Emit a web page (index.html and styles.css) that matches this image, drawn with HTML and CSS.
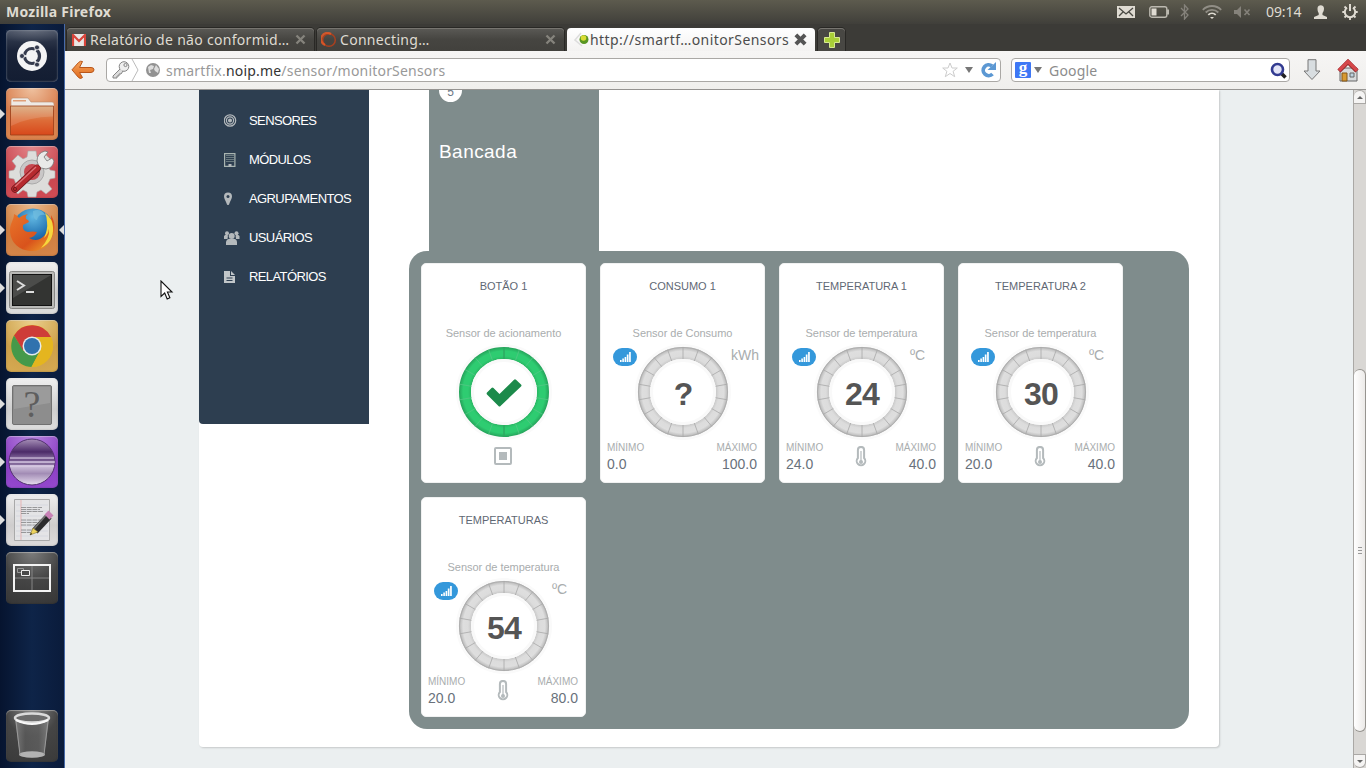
FILE: index.html
```html
<!DOCTYPE html>
<html lang="pt-BR">
<head>
<meta charset="utf-8">
<title>monitorSensors</title>
<link rel="stylesheet" href="styles.css">
</head>
<body>
<svg class="defs" width="0" height="0">
  <defs>
    <radialGradient id="gGrey" gradientUnits="userSpaceOnUse" cx="50" cy="50" r="45"><stop offset=".73" stop-color="#c8c8c8"/><stop offset=".8" stop-color="#dcdcdc"/><stop offset=".91" stop-color="#dedede"/><stop offset="1" stop-color="#b4b4b4"/></radialGradient>
    <radialGradient id="gGreen" gradientUnits="userSpaceOnUse" cx="50" cy="50" r="45"><stop offset=".73" stop-color="#29b562"/><stop offset=".8" stop-color="#2ecc71"/><stop offset=".91" stop-color="#2ecc71"/><stop offset="1" stop-color="#25a25a"/></radialGradient>
    <radialGradient id="shine" cx=".5" cy="0" r=".8"><stop offset="0" stop-color="#fff" stop-opacity=".55"/><stop offset="1" stop-color="#fff" stop-opacity="0"/></radialGradient>
    <linearGradient id="folder" x1="0" y1="0" x2="0" y2="1"><stop offset="0" stop-color="#d9a87a"/><stop offset=".5" stop-color="#dd6c38"/><stop offset="1" stop-color="#d8481b"/></linearGradient>
    <radialGradient id="globe" cx=".5" cy=".2" r=".8"><stop offset="0" stop-color="#63b9e3"/><stop offset=".6" stop-color="#2070b0"/><stop offset="1" stop-color="#153a78"/></radialGradient>
    <linearGradient id="fox" x1="0" y1="0" x2="1" y2="1"><stop offset="0" stop-color="#e8752a"/><stop offset=".6" stop-color="#d9531c"/><stop offset="1" stop-color="#f3ae2c"/></linearGradient>
    <linearGradient id="ecl" x1="0" y1="0" x2="0" y2="1"><stop offset="0" stop-color="#a790b8"/><stop offset=".28" stop-color="#4b2a68"/><stop offset=".45" stop-color="#8d74a5"/><stop offset=".6" stop-color="#cbbcd8"/><stop offset=".75" stop-color="#a28cb5"/><stop offset="1" stop-color="#e6dcee"/></linearGradient>
    <linearGradient id="bin" x1="0" y1="0" x2="1" y2="0"><stop offset="0" stop-color="#8a8a8a"/><stop offset=".3" stop-color="#5c5c5c"/><stop offset=".7" stop-color="#626262"/><stop offset="1" stop-color="#8c8c8c"/></linearGradient>
    <linearGradient id="orange" x1="0" y1="0" x2="0" y2="1"><stop offset="0" stop-color="#f6a35c"/><stop offset="1" stop-color="#df6a1c"/></linearGradient>
    <path id="ticks" d="M50 5V17M65.4 7.7l-4.1 11.3M78.9 15.5l-7.7 9.2M89 27.5l-10.4 6M94.3 42.2l-11.8 2.1M94.3 57.8l-11.8-2.1M89 72.5l-10.4-6M78.9 84.5l-7.7-9.2M65.4 92.3l-4.1-11.3M50 95V83M34.6 92.3l4.1-11.3M21.1 84.5l7.7-9.2M11 72.5l10.4-6M5.7 57.8l11.8-2.1M5.7 42.2l11.8 2.1M11 27.5l10.4 6M21.1 15.5l7.7 9.2M34.6 7.7l4.1 11.3"/>
  </defs>
  <symbol id="ring" viewBox="2 2 96 96"><circle cx="50" cy="50" r="48" fill="#fafafa"/><circle cx="50" cy="50" r="39" fill="#fff" stroke="url(#gGrey)" stroke-width="12"/><circle cx="50" cy="50" r="44.6" fill="none" stroke="#ababab" stroke-width=".8"/><circle cx="50" cy="50" r="31.5" fill="none" stroke="#f9f9f9" stroke-width="3"/><use href="#ticks" stroke="#a8a8a8" stroke-width=".8"/></symbol>
  <symbol id="ring-on" viewBox="2 2 96 96"><circle cx="50" cy="50" r="48" fill="#fafafa"/><circle cx="50" cy="50" r="39" fill="#fff" stroke="url(#gGreen)" stroke-width="12"/><circle cx="50" cy="50" r="31.5" fill="none" stroke="#f9f9f9" stroke-width="3"/><use href="#ticks" stroke="#55c585" stroke-width=".8"/><path d="M50 5V17M50 83V95" stroke="#1f9a53"/></symbol>
  <symbol id="bars" viewBox="0 0 12 10"><path d="M1 8h1.600v2H1zM3.300 6.500h1.600V10H3.300zM5.600 5h1.600v5H5.600zM7.800 2.500h1.700V10H7.800zM10.100 0h1.700v10h-1.700z" fill="#fff"/></symbol>
  <symbol id="thermo" viewBox="0 0 12 22"><path d="M2.900 12V4a3.100 3.100 0 0 1 6.200 0v8a4.300 4.300 0 1 1-6.200 0z" fill="none" stroke="#b4babc" stroke-width="2"/><path d="M6 5v10" stroke="#b4babc" stroke-width="1.200"/><circle cx="6" cy="16" r="2" fill="#b4babc"/></symbol>
  <symbol id="tabx" viewBox="0 0 12 12"><path d="M2.300 2.300l7.400 7.400M9.700 2.300L2.300 9.700" stroke="currentColor"/></symbol>
</svg>

<header class="panel">
  <span class="app-name">Mozilla Firefox</span>
  <div class="tray">
    <svg class="t-mail" width="18" height="12"><path d="M0 0h18v12H0z" fill="#dfdbd2"/><path d="M2 2l7 6 7-6M2 10l4-4M16 10l-4-4" stroke="#4a4943" fill="none" stroke-width="1.300"/></svg>
    <svg class="t-bat" width="21" height="12"><rect x=".8" y=".8" width="17" height="10.400" rx="2" fill="none" stroke="#bcb9b0" stroke-width="1.400"/><path d="M2.500 2.500h5v7h-5z" fill="#dfdbd2"/><path d="M19 3.500v5" stroke="#bcb9b0" stroke-width="2"/></svg>
    <svg class="t-bt" width="10" height="16"><path d="M1 4l7 7-3.500 4V1L8 5l-7 7" fill="none" stroke="#85827b" stroke-width="1.300"/></svg>
    <svg class="t-wifi" width="20" height="14" fill="none" stroke-width="1.800"><path d="M.8 4.800a13 13 0 0 1 18.400 0M3.700 7.500a9 9 0 0 1 12.600 0" stroke="#918e86"/><path d="M6.300 9.800a5.400 5.400 0 0 1 7.400 0" stroke="#dfdbd2"/><path d="M8 12l2 2 2-2z" fill="#dfdbd2" stroke="none"/></svg>
    <svg class="t-vol" width="17" height="12"><path d="M0 4h3l4-4v12L3 8H0z" fill="#85827b"/><path d="M10.500 3.500l5 5.500M15.500 3.500l-5 5.500" stroke="#85827b" stroke-width="1.600"/></svg>
    <span class="clock">09:14</span>
    <svg class="t-user" width="13" height="14"><path d="M3.500 3.500C3.500-.7 10-.7 10 3.500c0 2.500-.8 3.500-1.500 4.500v2l4.500 2v2H0v-2l4.700-2V8C4 7 3.500 6 3.500 3.500z" fill="#dfdbd2"/></svg>
    <svg class="t-gear" width="16" height="16" fill="none" stroke="#dfdbd2"><path d="M5 3.800a5.200 5.200 0 1 0 6 0" stroke-width="2"/><path d="M8 0v7" stroke-width="2"/><path d="M.3 8h2.500M13.200 8h2.500M8 13v3M2.500 2.500l2 2M13.500 2.500l-2 2M2.500 13.500l2-2M13.500 13.500l-2-2" stroke-width="1.800"/></svg>
  </div>
</header>

<div class="desktop">
  <nav class="launcher">
    <div class="app dash"><svg viewBox="0 0 52 52"><circle cx="26" cy="26" r="15" fill="#f4f4f5"/><circle cx="26" cy="26" r="7.500" fill="none" stroke="#343a4d" stroke-width="3.200" stroke-dasharray="13.700 2" stroke-dashoffset="7"/><g fill="#343a4d" stroke="#f4f4f5" stroke-width=".8"><circle cx="16" cy="26" r="2.500"/><circle cx="31" cy="17.400" r="2.500"/><circle cx="31" cy="34.600" r="2.500"/></g><path d="M0 0h52v14Q26 18 0 14z" fill="url(#shine)" opacity=".4"/></svg></div>
    <div class="app files open"><svg viewBox="0 0 52 52"><path d="M5 12q0-2 2-2h15l3 4h21q2 0 2 2v6H5z" fill="#eeeae5" stroke="#b9896b" stroke-width=".6"/><path d="M7 12h13v1.500H7z" fill="#df9f78"/><path d="M4.500 18h43v29h-43z" fill="url(#folder)" stroke="#9b3c16" stroke-width=".8"/><path d="M5 18.500h42v10Q22 29 5 38z" fill="#fff" opacity=".13"/></svg></div>
    <div class="app settings"><svg viewBox="0 0 52 52"><g fill="#dddddb" stroke="#aaa" stroke-width=".6"><path d="M22 5h8l1 6 4 2 5-4 6 6-4 5 2 4 5 1v7l-5 1-2 5 4 5-6 5-5-4-4 2-1 5h-8l-1-5-4-2-5 4-6-5 4-5-2-5-5-1v-7l5-1 2-4-4-5 6-6 5 4 4-2z"/></g><circle cx="26" cy="26" r="12" fill="#c9c7c7" stroke="#aaa"/><circle cx="26" cy="26" r="8" fill="#c7474f"/><path d="M33 21l-2-6q0-8 8-10l3 1-4 5 3 4 5-3 2 3q-1 7-8 8l-5-1z" fill="#e9e9e8" stroke="#777" stroke-width=".8"/><path d="M31 22.500L9 43" stroke="#741a1e" stroke-width="7.500" stroke-linecap="round"/><path d="M31 22L9 43" stroke="#b6292e" stroke-width="5.900" stroke-linecap="round"/><path d="M30 21L9 40.500" stroke="#dc777a" stroke-width="1.200"/><circle cx="9" cy="43" r="1.600" fill="none" stroke="#741a1e"/></svg></div>
    <div class="app firefox open active"><svg viewBox="0 0 52 52"><circle cx="27" cy="25" r="20.500" fill="url(#globe)"/><path d="M27 7q8-3 12 4-7-1-8 5-4 0-4-9z" fill="#73bfe0" opacity=".7"/><path d="M8 10q3 1 5 4 3-3 9-4-3 2-2 5 3 1 3 3l-6 3q-1 6 5 7 5-1 9 0-2 5-8 6 8 5 15-2 5-5 7-13l0-8q5 8 3 17C45 39 38 47 26 47 13 47 4 38 4 26 4 19 8 16 8 10z" fill="url(#fox)"/><path d="M39 9q8 6 8 14 1 15-12 21 9-10 8-19-1 6-5 9 4-9 3-16 0-5-2-9z" fill="#f6d63d"/></svg></div>
    <div class="app terminal open"><svg viewBox="0 0 52 52"><rect x="3.500" y="9.500" width="45" height="37" rx="2" fill="#b9b9b7" stroke="#868684"/><rect x="6.500" y="12.500" width="39" height="31" fill="#333432" stroke="#121212"/><path d="M7 13h38L7 36z" fill="#fff" opacity=".12"/><path d="M11 19l7 4.500-7 4.500M20 30h8" stroke="#ddd" stroke-width="2" fill="none"/></svg></div>
    <div class="app chrome"><svg viewBox="0 0 52 52"><circle cx="26" cy="26" r="21" fill="#e9b91f"/><path d="M8 15.500A21 21 0 0 1 45 17H26L17 31z" fill="#ce3c38"/><path d="M8 15.500L17.500 31 34 31 25.500 47A21 21 0 0 1 8 15.500z" fill="#45994a"/><path d="M45 17H26a9 9 0 0 1 8 14L25.500 47A21 21 0 0 0 45 17z" fill="#e4b51f"/><circle cx="26" cy="26" r="9.500" fill="#e6ebed"/><circle cx="26" cy="26" r="8" fill="#3072ae"/></svg></div>
    <div class="app unknown open"><svg viewBox="0 0 52 52"><rect x="6.500" y="7.500" width="39" height="39" rx="1.500" fill="#8d8d8d" stroke="#717171"/><path d="M8 9h36v16L8 31z" fill="#fff" opacity=".13"/></svg><span>?</span></div>
    <div class="app eclipse open"><svg viewBox="0 0 52 52"><circle cx="26" cy="26" r="23" fill="url(#ecl)" stroke="#52326f"/><path d="M4 22h44M3 26h46M4 30h44" stroke="#ddd0e8" stroke-width="1.200"/><path d="M4 24h44M4 28h44" stroke="#583774" stroke-width="1.200"/></svg></div>
    <div class="app editor open"><svg viewBox="0 0 52 52"><path d="M8.500 5.500h35v41h-35z" fill="#e4e4e6" stroke="#a9a9a9"/><path d="M10 11h32M10 17h32M10 22h32M10 27h32M10 32h32M10 37h32M10 42h32" stroke="#ccd0dc" stroke-width=".6"/><path d="M15 6v40" stroke="#e4b3b3"/><path d="M15 13.500h21M15 15.500h19M15 17.500h22M15 19.500h8M15 26h21M15 28.500h20M15 31h17M15 36h13M15 38.500h14" stroke="#8d8d90" stroke-width=".9" stroke-dasharray="5 .7"/><path d="M29 37L43 22" stroke="#2c2c2c" stroke-width="7"/><path d="M27 36L41 20" stroke="#777" stroke-width="1.500"/><path d="M24 41l3-7 5 4z" fill="#ecd35e" stroke="#756422" stroke-width=".5"/><path d="M41 23l4-4" stroke="#c781b6" stroke-width="7"/><path d="M24 41l1-2 1 1z"/></svg></div>
    <div class="app workspace"><svg viewBox="0 0 52 52"><path d="M8 13h36v26H8zM26 14v24M9 26h34" fill="none" stroke="#858585"/><rect x="8" y="13" width="36" height="26" fill="none" stroke="#f3f3f3" stroke-width="2"/><path d="M11.500 16.500h6v4h-6z" fill="none" stroke="#999"/><path d="M15.500 18.500h8v5h-8z" fill="#4a4a4a" stroke="#eee"/></svg></div>
    <div class="app trash"><svg viewBox="0 0 52 52"><path d="M9 9l5 37q12 4 24 0l5-37z" fill="url(#bin)" opacity=".75"/><ellipse cx="26" cy="44.500" rx="13" ry="3.300" fill="#b2b2b2"/><path d="M10 11l4 34M42 11l-4 34" stroke="#9a9a9a"/><ellipse cx="26" cy="8" rx="17" ry="4.500" fill="#6c6c6c" stroke="#dadada" stroke-width="2.500"/><path d="M10 10q16 8 32 0" stroke="#f8f8f8" stroke-width="2" fill="none"/></svg></div>
  </nav>

  <div class="browser">
    <div class="tabs">
      <div class="tab"><svg width="14" height="12"><path d="M0 0h14v12H0z" fill="#e9e7e5"/><path d="M1 12V1l6 6 6-6v11" fill="none" stroke="#d9453b" stroke-width="2.200"/></svg><span class="label l1">Relatório de não conformid…</span><svg class="x" width="13" height="13"><use href="#tabx"/></svg></div>
      <div class="tab loading"><svg width="16" height="16" fill="none"><circle cx="8" cy="8" r="6.300" stroke="#a9401f" stroke-width="1.500"/><path d="M4 13A6.300 6.300 0 1 1 10 2" stroke="#ee5a26" stroke-width="2.200" opacity=".8"/></svg><span class="label l2">Connecting…</span><svg class="x" width="13" height="13"><use href="#tabx"/></svg></div>
      <div class="tab current"><svg width="16" height="16"><path d="M7 1L1 8l7 6" fill="none" stroke="#ddd" stroke-width="1.500"/><circle cx="10" cy="7.500" r="4.500" fill="#589522"/><circle cx="9.500" cy="6" r="2.800" fill="#d9dc35"/></svg><span class="label l3">http://smartf…onitorSensors</span><svg class="x" width="15" height="15"><use href="#tabx"/></svg></div>
      <div class="newtab"><svg width="16" height="16"><path d="M5.500.5h5v5h5v5h-5v5h-5v-5h-5v-5h5z" fill="#a9cf38" stroke="#d7ea90"/></svg></div>
    </div>
    <div class="toolbar">
      <svg class="back" width="24" height="20"><path d="M11.500 1.500q-2-1-4 1L1 9.800l6.500 7.700q2 2 4 0l-3-5H20q3-.4 3-2.700T20 7.500H8.500z" fill="url(#orange)" stroke="#b8561b"/></svg>
      <div class="url">
        <svg class="key" width="30" height="22"><g fill="none" stroke="#858585"><circle cx="13" cy="7.500" r="4.800" fill="#eee"/><circle cx="14.500" cy="6" r="1.600"/><path d="M9 10l-7 7v2h4v-2h2v-2h2l2-3" fill="#ddd"/></g><path d="M21 0l6 11-6 11" stroke="#bbb" fill="none"/></svg>
        <svg class="world" width="14" height="14"><circle cx="7" cy="7" r="7" fill="#929292"/><path d="M2 4l3-2 3 1-1 3-3 1 1 3-2 0zM10 2l3 4-1 4-3-2-1-2z" fill="#ddd"/></svg>
        <span class="address">smartfix.<b>noip.me</b>/sensor/monitorSensors</span>
        <svg class="star" width="16" height="16"><path d="M8 1l2 5h5.300l-4.200 3.300 1.600 5.400L8 11.500l-4.700 3.200 1.600-5.400L.7 6H6z" fill="#fff" stroke="#ccc"/></svg>
        <svg class="drop" width="8" height="6"><path d="M0 0h8L4 6z" fill="#777"/></svg>
        <svg class="reload" width="16" height="16"><path d="M12.500 12A5.400 5.400 0 1 1 12 4" fill="none" stroke="#5c98d3" stroke-width="3.800"/><path d="M7.500 8H16V0z" fill="#5c98d3"/></svg>
      </div>
      <div class="search"><span class="goog">g</span><svg width="8" height="6"><path d="M0 0h8L4 6z" fill="#777"/></svg><span class="hint">Google</span><svg class="lens" width="17" height="17"><path d="M11 11l4.500 4.500" stroke="#222" stroke-width="3.500"/><circle cx="7.500" cy="7.500" r="5.500" fill="#e3e5f7" stroke="#323b91" stroke-width="2.600"/></svg></div>
      <svg class="download" width="18" height="22"><path d="M5 .7h8V12h4L9 20.500 1 12h4z" fill="#d8dde0" stroke="#777"/></svg>
      <svg class="home" width="22" height="23"><path d="M3 9h17v13H3z" fill="#d7dadb" stroke="#666"/><path d="M5 14h5v8H5z" fill="#d89a31" stroke="#855719"/><path d="M13 14h4v4h-4z" fill="#bcd2df" stroke="#666"/><path d="M2 12l9-9 9 9" stroke="#8d2528" stroke-width="4.500" fill="none"/><path d="M2 11.500l9-9 9 9" stroke="#d5474a" stroke-width="3.300" fill="none"/></svg>
    </div>
    <div class="viewport">
      <div class="page">
        <div class="wrapper">
          <ul class="menu">
            <li><svg viewBox="0 0 25 14" fill="none" stroke="#b4b9bc" stroke-width="1.200"><circle cx="6" cy="6.500" r="5.700"/><circle cx="6" cy="6.500" r="3.600"/><circle cx="6" cy="6.500" r="1.400" fill="#b4b9bc"/></svg>SENSORES</li>
            <li><svg viewBox="0 0 25 14"><path d="M.6.6h10.300v12.800H.6z" fill="none" stroke="#a9b5b1" stroke-width="1.200"/><path d="M3 2v8M5 2v8M7 2v8M9 2v8" stroke="#a9b8b1" stroke-dasharray="1 1"/><path d="M4.500 11h3v2.500h-3z" fill="#b4b9bc"/></svg>MÓDULOS</li>
            <li><svg viewBox="0 0 25 14"><path d="M4 .5A4 4 0 0 1 8 4.500C8 6.500 6.500 8.500 5 12.500q-1 1-2 0C1.500 8.500 0 6.500 0 4.500A4 4 0 0 1 4 .5z" fill="#b4b9bc"/><circle cx="4" cy="4.500" r="1.500" fill="#2d3e50"/></svg>AGRUPAMENTOS</li>
            <li><svg viewBox="0 0 25 14" fill="#b4b9bc"><circle cx="3" cy="2.200" r="2"/><circle cx="12.500" cy="2.200" r="2"/><path d="M0 8V5q2-2 4-.5L3.500 8zM15.500 8V5q-2-2-4-.5L12 8z"/><circle cx="7.700" cy="5" r="3"/><path d="M2 14v-3q1-4 5.700-3Q12.500 7 13 11v3z"/></svg>USUÁRIOS</li>
            <li><svg viewBox="0 0 25 14"><path d="M0 1h6v5h5v7H0z" fill="#c1c6c9"/><path d="M7 1l4 4H7z" fill="#c1c6c9"/><path d="M2.500 8h6M2.500 10.500h6" stroke="#2d3e50"/></svg>RELATÓRIOS</li>
          </ul>
          <main>
            <div class="tile"><span class="count">5</span><h3>Bancada</h3></div>
            <section class="group">
              <article class="card">
                <h4>BOTÃO 1</h4><p class="kind">Sensor de acionamento</p>
                <div class="gauge-row"><i></i><div class="gauge"><svg><use href="#ring-on"/></svg><svg class="check" viewBox="0 0 36 28"><path d="M1 13.500l4.500-4.500q1-1 2 0L13.500 15 28 .8q1-1 2 0L35 5.500q1 1 0 2L14.500 27q-1 1-2 0L1 15.500q-.8-1 0-2z" fill="#1c8a4b"/></svg></div><i></i></div>
                <div class="limits solo"><svg width="18" height="18"><rect x="1" y="1" width="16" height="16" rx="1" fill="none" stroke="#b4babc" stroke-width="2"/><path d="M5 5h8v8H5z" fill="#b4babc"/></svg></div>
              </article>
              <article class="card">
                <h4>CONSUMO 1</h4><p class="kind">Sensor de Consumo</p>
                <div class="gauge-row"><span class="badge"><svg width="12" height="10"><use href="#bars"/></svg></span><div class="gauge"><svg><use href="#ring"/></svg><strong>?</strong></div><span class="unit">kWh</span></div>
                <div class="limits"><div><small>MÍNIMO</small><span>0.0</span></div><i></i><div><small>MÁXIMO</small><span>100.0</span></div></div>
              </article>
              <article class="card">
                <h4>TEMPERATURA 1</h4><p class="kind">Sensor de temperatura</p>
                <div class="gauge-row"><span class="badge"><svg width="12" height="10"><use href="#bars"/></svg></span><div class="gauge"><svg><use href="#ring"/></svg><strong>24</strong></div><span class="unit">ºC</span></div>
                <div class="limits"><div><small>MÍNIMO</small><span>24.0</span></div><svg width="12" height="22"><use href="#thermo"/></svg><div><small>MÁXIMO</small><span>40.0</span></div></div>
              </article>
              <article class="card">
                <h4>TEMPERATURA 2</h4><p class="kind">Sensor de temperatura</p>
                <div class="gauge-row"><span class="badge"><svg width="12" height="10"><use href="#bars"/></svg></span><div class="gauge"><svg><use href="#ring"/></svg><strong>30</strong></div><span class="unit">ºC</span></div>
                <div class="limits"><div><small>MÍNIMO</small><span>20.0</span></div><svg width="12" height="22"><use href="#thermo"/></svg><div><small>MÁXIMO</small><span>40.0</span></div></div>
              </article>
              <article class="card">
                <h4>TEMPERATURAS</h4><p class="kind">Sensor de temperatura</p>
                <div class="gauge-row"><span class="badge"><svg width="12" height="10"><use href="#bars"/></svg></span><div class="gauge"><svg><use href="#ring"/></svg><strong>54</strong></div><span class="unit">ºC</span></div>
                <div class="limits"><div><small>MÍNIMO</small><span>20.0</span></div><svg width="12" height="22"><use href="#thermo"/></svg><div><small>MÁXIMO</small><span>80.0</span></div></div>
              </article>
            </section>
          </main>
        </div>
      </div>
      <div class="scrollbar">
        <div class="arrow up"></div>
        <div class="track"><div class="thumb"><i></i><i></i><i></i></div></div>
        <div class="arrow down"></div>
      </div>
    </div>
  </div>
</div>
<svg class="cursor" width="14" height="21"><path d="M1 1v15.500l3.700-3.500 2.500 6 2.700-1.200L7.400 12H12z" fill="#fff" stroke="#111" stroke-width="1.100"/></svg>
</body>
</html>
```
FILE: styles.css
```css
* { box-sizing: border-box; }
body { margin: 0; width: 1366px; height: 768px; overflow: hidden; display: flex; flex-direction: column; font-family: "Liberation Sans", Arial, sans-serif; }
svg { display: block; flex: none; }
h3, h4, p, ul { margin: 0; padding: 0; font-weight: 400; }
.defs { position: absolute; }

.panel { flex: none; height: 24px; background: linear-gradient(#5d5b4e, #403f3a); display: flex; justify-content: space-between; align-items: center; padding: 0 8px 0 6px; color: #dfdbd2; font: 14px/24px "Noto Sans", sans-serif; }
.app-name { font-weight: 700; font-size: 14px; letter-spacing: .25px; }
.tray { display: flex; align-items: center; }
.t-bat { margin-left: 14px; }
.t-bt { margin-left: 10px; }
.t-wifi { margin-left: 12px; }
.t-vol { margin-left: 12px; }
.clock { margin-left: 15px; width: 37px; letter-spacing: -.1px; }
.t-user { margin-left: 11px; }
.t-gear { margin-left: 15px; }

.desktop { flex: 1; min-height: 0; display: flex; }
.launcher { width: 65px; border-right: 1px solid #476aa9; background: linear-gradient(90deg, #06142f, #0e2448 50%, #0a1b3b); display: flex; flex-direction: column; gap: 6px; padding: 6px 0 6px 6px; }
.app { position: relative; width: 52px; height: 52px; border-radius: 5px; box-shadow: inset 0 1px 1px rgba(255,255,255,.4), inset 0 0 2px rgba(0,0,0,.3); }
.app svg { width: 52px; height: 52px; }
.app.open::before { content: ""; position: absolute; left: -6px; top: 21px; border: 5px solid transparent; border-left-color: #ddd; border-right: 0; }
.app.active::after { content: ""; position: absolute; right: -6px; top: 21px; border: 5px solid transparent; border-right-color: #ddd; border-left: 0; }
.dash { background: linear-gradient(#3c4558, #1a2338 40%, #131d32); box-shadow: inset 0 0 2px #8b94a5; }
.files { background: radial-gradient(circle at 50% 0, #efc2a0, #d87c4c 55%, #da854e); }
.settings { background: radial-gradient(circle at 50% 0, #e4878b, #c9464f 60%, #d04c55); }
.firefox { background: radial-gradient(circle at 50% 0, #eab98c, #cf7e40 60%, #d5864a); }
.terminal, .unknown { background: linear-gradient(#f0f0f0, #cfcfcf 60%, #dedede); }
.chrome { background: radial-gradient(circle at 50% 0, #ecd08c, #cda04a 60%, #d6aa52); }
.eclipse { background: radial-gradient(circle at 50% 0, #b784e0, #8b3fc4 60%, #9549cf); }
.editor { background: linear-gradient(#eee, #cfcdcd 60%, #dddbdb); }
.workspace { background: radial-gradient(circle at 50% 0, #7c7c7c, #454545 50%, #363636); }
.trash { margin-top: auto; background: radial-gradient(circle at 50% 0, #858585, #454545 45%, #3a3a3a); }
.unknown span { position: absolute; left: 0; top: 7px; width: 52px; text-align: center; font: 38px/38px "Liberation Serif", serif; color: #5e5e5e; }

.browser { flex: 1; min-width: 0; display: flex; flex-direction: column; }
.tabs { height: 27px; flex: none; background: #3c3b37; display: flex; gap: 3px; padding: 4px 0 0 2px; font: 14px/22px "Noto Sans", sans-serif; }
.tab { width: 247px; height: 23px; border-radius: 4px 4px 0 0; display: flex; align-items: center; padding: 0 7px 0 5px; gap: 4px; background: linear-gradient(#5b5a56, #464541 50%, #42413d); box-shadow: 0 0 0 1px #292825, inset 0 1px #777570; color: #dfdbd2; }
.tab .x { margin-left: auto; color: #85837c; stroke-width: 2.2; }
.tab.loading { padding-left: 4px; gap: 3px; }
.tab.current { width: 248px; background: linear-gradient(#fff, #f3f2f1); color: #4c4c4c; box-shadow: none; padding-left: 7px; gap: 0; }
.tab.current .x { color: #555; stroke-width: 3.2; }
.label { white-space: nowrap; }
.l1 { letter-spacing: .3px; }
.l2 { letter-spacing: .3px; }
.l3 { letter-spacing: .43px; }
.newtab { width: 27px; height: 23px; border-radius: 4px 4px 0 0; background: #484743; box-shadow: 0 0 0 1px #292825, inset 0 1px #777570; display: grid; place-items: center; }
.toolbar { height: 39px; flex: none; background: linear-gradient(#f6f5f4, #f0efed); border-bottom: 1px solid #979593; display: flex; align-items: center; padding: 0 7px 0 6px; font: 14px/22px "Noto Sans", sans-serif; }
.url, .search { height: 24px; background: #fff; border: 1px solid #aaa8a5; border-radius: 4px; display: flex; align-items: center; }
.url { width: 895px; margin-left: 11px; padding-right: 4px; }
.key { margin-left: 4px; }
.world { margin-left: 5px; }
.address { margin-left: 6px; padding-top: 1px; color: #999; letter-spacing: .2px; }
.address b { font-weight: 400; color: #333; }
.star { margin-left: auto; }
.drop { margin-left: 7px; margin-right: 7px; }
.search { width: 279px; margin-left: 10px; padding: 0 2px 0 3px; gap: 3px; }
.goog { width: 16px; height: 16px; background: #3f78f5; color: #fff; border-radius: 1px; font: 700 17px/12px "Liberation Serif", serif; text-align: center; }
.hint { margin-left: 4px; padding-top: 1px; color: #8c8c8c; letter-spacing: .2px; }
.lens { margin-left: auto; }
.download { margin-left: 13px; }
.home { margin-left: 16px; }

.viewport { flex: 1; min-height: 0; display: flex; }
.page { flex: 1; background: #ebeff0; padding: 0 0 21px 134px; }
.wrapper { width: 1020px; height: 657px; background: #fff; border-radius: 0 0 4px 4px; box-shadow: 1px 1px 2px rgba(0,0,0,.16); display: flex; }
.menu { width: 170px; height: 334px; background: #2d3e50; border-radius: 0 0 0 4px; padding: 11px 0 0 25px; list-style: none; }
.menu li { height: 39px; display: flex; align-items: center; line-height: 39px; font-size: 13px; letter-spacing: -.6px; color: #fff; white-space: nowrap; }
.menu svg { width: 25px; height: 14px; }
main { margin-left: 40px; width: 780px; }
.tile { width: 170px; height: 161px; margin-left: 20px; background: #7f8c8c; padding-left: 10px; overflow: hidden; }
.count { display: block; width: 23px; height: 24px; margin-top: -12px; border-radius: 12px; background: #fff; color: #6d7787; font-size: 12px; line-height: 28px; text-align: center; }
.tile h3 { margin-top: 38px; color: #fff; font-size: 19px; line-height: 24px; letter-spacing: .45px; }
.group { width: 780px; height: 478px; padding: 12px; border-radius: 18px; background: #7f8c8c; display: grid; grid-template-columns: repeat(4, 165px); grid-auto-rows: 220px; gap: 14px; }
.card { background: #fff; border-radius: 5px; border: 1px solid #f0f1f1; padding-top: 15px; display: flex; flex-direction: column; }
.card h4 { height: 14px; font-size: 11px; line-height: 14px; text-align: center; color: #5f6874; }
.card .kind { margin-top: 33px; height: 14px; font-size: 11px; line-height: 14px; text-align: center; color: #a9adae; white-space: nowrap; letter-spacing: -.03px; }
.gauge-row { margin-top: 7px; height: 90px; display: grid; grid-template-columns: 24px 90px 30px; column-gap: 2px; padding-left: 11px; }
.gauge-row .badge { margin: 1px 0 0 1px; width: 24px; height: 18px; border-radius: 9px; background: #3498db; display: grid; place-items: center; }
.gauge { display: grid; place-items: center; }
.gauge > * { grid-area: 1 / 1; }
.gauge > svg:first-child { width: 96px; height: 96px; margin: -3px; }
.gauge .check { width: 36px; height: 28px; margin-top: 2px; }
.gauge strong { font-size: 32px; line-height: 34px; letter-spacing: -.9px; color: #555; margin-top: 3px; z-index: 1; }
.unit { font-size: 14px; line-height: 16px; color: #a9adae; padding-left: 1px; }
.limits { display: flex; justify-content: space-between; padding: 4px 7px 0 6px; }
.limits div { width: 50px; white-space: nowrap; }
.limits div:last-child { text-align: right; }
.limits small { display: block; font-size: 10px; line-height: 14px; color: #a9adae; }
.limits span { display: block; font-size: 14px; line-height: 18px; color: #69717b; }
.limits > svg { margin-top: 5px; }
.solo { justify-content: center; }
.limits.solo > svg { margin-top: 6px; }

.scrollbar { width: 13px; flex: none; background: #d9d7d4; border-left: 1px solid #aaa8a5; display: flex; flex-direction: column; }
.arrow { height: 14px; background: #f5f4f3; border: 1px solid #aaa8a5; border-left: 0; display: grid; place-items: center; }
.arrow::after { content: ""; border: 3px solid transparent; }
.up { border-radius: 6px 6px 0 0; }
.up::after { border-bottom-color: #666; border-top: 0; }
.down { border-radius: 0 0 6px 6px; }
.down::after { border-top-color: #666; border-bottom: 0; }
.track { flex: 1; padding-top: 265px; }
.thumb { height: 363px; border: 1px solid #96948f; border-left: 0; border-radius: 6px; background: linear-gradient(90deg, #fff, #eceae8); display: flex; flex-direction: column; align-items: center; justify-content: center; gap: 2px; }
.thumb i { width: 4px; height: 1px; background: #999; }
.cursor { position: absolute; left: 160px; top: 280px; }
```
